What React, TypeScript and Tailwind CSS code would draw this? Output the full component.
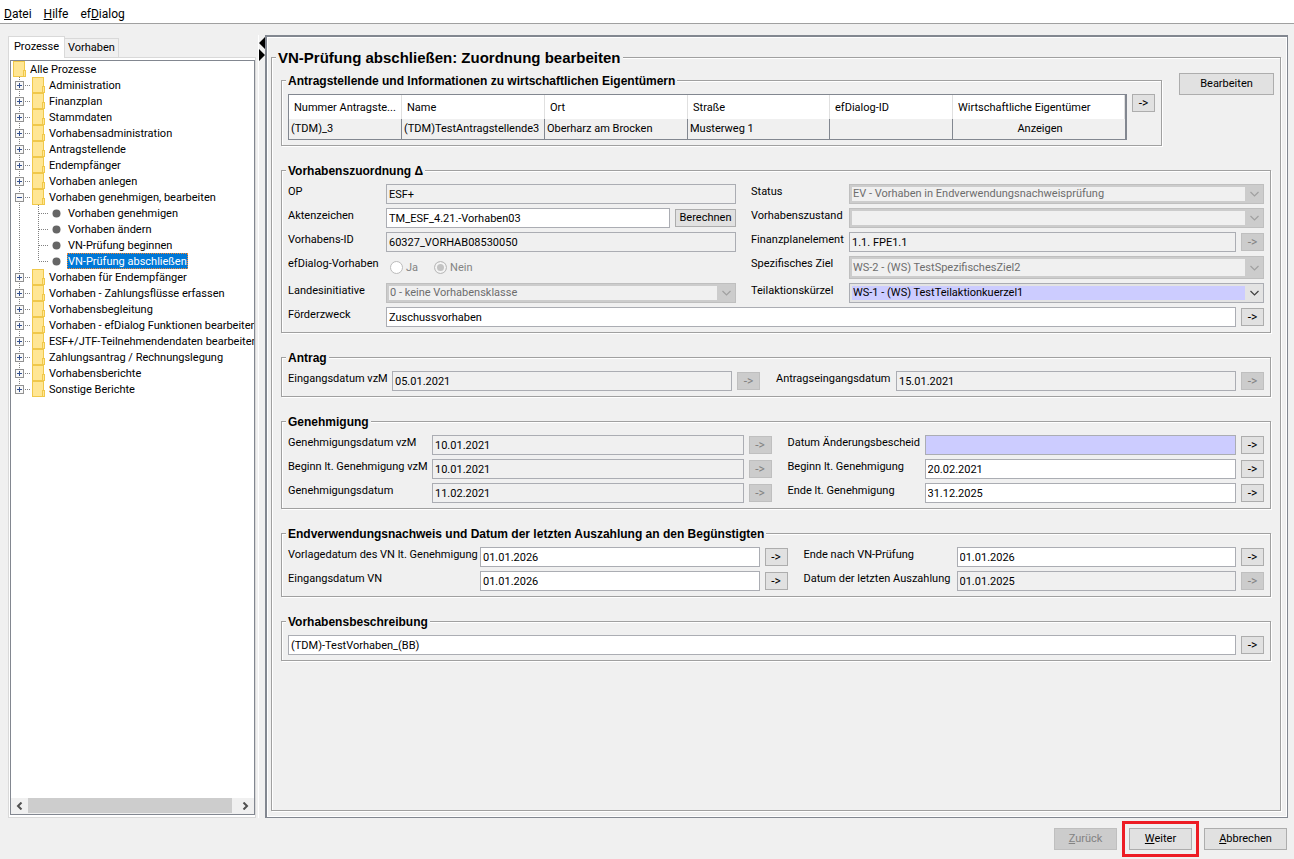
import { ReactNode, useId } from "react";
import clsx from "clsx";

interface TreeItem {
  label: string;
  children?: string[];
}

const TREE: TreeItem[] = [
  { label: "Administration" },
  { label: "Finanzplan" },
  { label: "Stammdaten" },
  { label: "Vorhabensadministration" },
  { label: "Antragstellende" },
  { label: "Endempfänger" },
  { label: "Vorhaben anlegen" },
  {
    label: "Vorhaben genehmigen, bearbeiten",
    children: [
      "Vorhaben genehmigen",
      "Vorhaben ändern",
      "VN-Prüfung beginnen",
      "VN-Prüfung abschließen",
    ],
  },
  { label: "Vorhaben für Endempfänger" },
  { label: "Vorhaben - Zahlungsflüsse erfassen" },
  { label: "Vorhabensbegleitung" },
  { label: "Vorhaben - efDialog Funktionen bearbeiten" },
  { label: "ESF+/JTF-Teilnehmendendaten bearbeiten" },
  { label: "Zahlungsantrag / Rechnungslegung" },
  { label: "Vorhabensberichte" },
  { label: "Sonstige Berichte" },
];

const ACTIVE = "VN-Prüfung abschließen";

function FolderIcon() {
  return (
    <svg width="13" height="16" viewBox="0 0 13 16" className="shrink-0" shapeRendering="crispEdges">
      <rect x="0.5" y="0.5" width="11" height="15" fill="#ffe694" stroke="#f0c84a" />
      <rect x="10.5" y="9.5" width="2" height="6" fill="#ffe694" stroke="#f0c84a" />
    </svg>
  );
}

function Expander({ open, last }: { open: boolean; last: boolean }) {
  return (
    <svg width="21" height="16" viewBox="0 0 21 16" className="shrink-0" shapeRendering="crispEdges">
      <path d={last ? "M8.5 0V8" : "M8.5 0V16"} stroke="#808080" strokeDasharray="1 1" />
      <path d="M14 8.5H19" stroke="#808080" strokeDasharray="1 1" />
      <rect x="4.5" y="4.5" width="8" height="8" fill="#f8f8f8" stroke="#919191" />
      <path d={open ? "M6 8.5H11" : "M6 8.5H11M8.5 6V11"} stroke="#33508f" />
    </svg>
  );
}

function LeafLines({ last }: { last: boolean }) {
  return (
    <svg width="52" height="16" viewBox="0 0 52 16" className="shrink-0">
      <g shapeRendering="crispEdges" stroke="#808080" strokeDasharray="1 1">
        <path d="M8.5 0V16" />
        <path d={last ? "M27.5 0V8" : "M27.5 0V16"} />
        <path d="M28 8.5H37" />
      </g>
      <circle cx="45.5" cy="8.5" r="4" fill="#666" />
    </svg>
  );
}

function Tree() {
  return (
    <ul className="flex-1 overflow-hidden leading-[18px] whitespace-nowrap">
      <li className="flex h-4 gap-1 pl-0.5">
        <FolderIcon />
        <a href="#alle">Alle Prozesse</a>
      </li>
      {TREE.map((item, i) => (
        <li key={item.label}>
          <div className="flex h-4">
            <Expander open={!!item.children} last={i === TREE.length - 1} />
            <FolderIcon />
            <a href="#prozess" className="pl-1">{item.label}</a>
          </div>
          {item.children && (
            <ul>
              {item.children.map((child, j) => (
                <li key={child} className="flex h-4 gap-1">
                  <LeafLines last={j === item.children!.length - 1} />
                  <a
                    href="#schritt"
                    className={clsx(
                      "px-px",
                      child === ACTIVE && "bg-[#0078d7] text-white outline-1 -outline-offset-1 outline-dotted outline-[#ff8728]",
                    )}
                  >
                    {child}
                  </a>
                </li>
              ))}
            </ul>
          )}
        </li>
      ))}
    </ul>
  );
}

function ScrollArrow({ dir }: { dir: "left" | "right" }) {
  return (
    <button aria-label={dir === "left" ? "Nach links" : "Nach rechts"} className="flex w-[17px] items-center justify-center">
      <svg width="7" height="8" viewBox="0 0 7 8">
        <path d={dir === "left" ? "M5.5 0.5L2 4L5.5 7.5" : "M1.5 0.5L5 4L1.5 7.5"} fill="none" stroke="#505050" strokeWidth="2" />
      </svg>
    </button>
  );
}

function Sidebar() {
  return (
    <aside className="flex w-[248px] shrink-0 flex-col pt-3">
      <div role="tablist" className="flex items-end">
        <button role="tab" aria-selected="true" className="z-10 -mb-px h-[22px] w-[57px] border border-b-0 border-[#d9d9d9] bg-white pb-0.5">
          Prozesse
        </button>
        <button role="tab" aria-selected="false" className="h-[19px] w-[54px] border border-b-0 border-l-0 border-[#d9d9d9]">
          Vorhaben
        </button>
      </div>
      <div className="flex flex-1 flex-col border border-[#d9d9d9] bg-white pt-0.5 pb-0.5 pl-px">
        <div className="flex flex-1 flex-col border border-[#828790]">
          <Tree />
          <div className="flex h-4 bg-[#f0f0f0] pb-px">
            <ScrollArrow dir="left" />
            <div className="flex-1 pr-[5px]">
              <div className="h-full bg-[#cdcdcd]" />
            </div>
            <ScrollArrow dir="right" />
          </div>
        </div>
      </div>
    </aside>
  );
}

function Splitter() {
  return (
    <div className="flex w-[9px] shrink-0 pt-[11px] pl-0.5">
      <div className="flex-1 border-l border-white">
        <svg width="6" height="26" viewBox="0 0 6 26" className="mt-0.5">
          <path d="M6 0V12L0 6ZM0 12V24L6 18Z" fill="#000" />
        </svg>
      </div>
    </div>
  );
}

const ETCHED = "min-w-0 border border-[#a0a0a0] shadow-[1px_1px_0_#fff,inset_1px_1px_0_#fff]";

function Group({ title, children, className }: { title: string; children: ReactNode; className?: string }) {
  return (
    <fieldset className={clsx(ETCHED, className)}>
      <legend className="ml-1 bg-[#f0f0f0] px-0.5 pt-0.5 font-['Liberation_Sans',sans-serif] text-[12px] leading-[14px] font-bold">
        {title}
      </legend>
      <div className="px-1.5 pt-1.5 pb-[5px]">{children}</div>
    </fieldset>
  );
}

interface ButtonProps {
  children: ReactNode;
  disabled?: boolean;
  className?: string;
}

function Button({ children, disabled, className }: ButtonProps) {
  return (
    <button
      disabled={disabled}
      className={clsx(
        "shrink-0 border",
        disabled ? "border-[#bfbfbf] bg-[#ccc] text-[#838383]" : "border-[#adadad] bg-[#e1e1e1]",
        className,
      )}
    >
      {children}
    </button>
  );
}

function ArrowButton({ disabled }: { disabled?: boolean }) {
  return (
    <Button disabled={disabled} className="h-[18px] w-[23px] text-[12px] leading-4">
      -&gt;
    </Button>
  );
}

interface FieldProps {
  label: string;
  value?: string;
  readOnly?: boolean;
  highlight?: boolean;
  arrow?: "on" | "off";
  indent?: string;
  wide?: boolean;
  extra?: ReactNode;
}

function Field({ label, value = "", readOnly, highlight, arrow, indent, wide, extra }: FieldProps) {
  const id = useId();
  return (
    <>
      <label htmlFor={id} className={clsx("whitespace-nowrap", indent)}>
        {label}
      </label>
      <div className={clsx("flex h-5 items-center gap-[5px]", wide && "col-span-3")}>
        <input
          id={id}
          defaultValue={value}
          readOnly={readOnly}
          className={clsx(
            "h-5 min-w-0 flex-1 border border-[#abadb3] px-0.5",
            highlight ? "bg-[#ccccff]" : readOnly ? "bg-[#f0f0f0]" : "bg-white",
          )}
        />
        {extra}
        {arrow && <ArrowButton disabled={arrow === "off"} />}
      </div>
    </>
  );
}

interface SelectFieldProps {
  label: string;
  value?: string;
  disabled?: boolean;
  indent?: string;
}

function SelectField({ label, value = "", disabled, indent }: SelectFieldProps) {
  const id = useId();
  return (
    <>
      <label htmlFor={id} className={clsx("whitespace-nowrap", indent)}>
        {label}
      </label>
      <div
        className={clsx(
          "flex min-h-5 border p-0.5",
          disabled ? "border-[#bfbfbf] bg-[#ccc]" : "border-[#abadb3] bg-[#e3e3e3]",
        )}
      >
        <select
          id={id}
          disabled={disabled}
          className={clsx(
            "min-h-[14px] min-w-0 flex-1 appearance-none pl-px leading-[14px] opacity-100",
            disabled ? "bg-[#f0f0f0] text-[#6d6d6d]" : "bg-[#ccccff]",
          )}
        >
          <option>{value}</option>
        </select>
        <svg width="16" height="14" viewBox="0 0 16 14" className="shrink-0 self-center">
          <path d="M5.5 5L9.5 9L13.5 5" fill="none" stroke={disabled ? "#a0a0a0" : "#404040"} strokeWidth="1.2" />
        </svg>
      </div>
    </>
  );
}

function RadioField() {
  return (
    <>
      <span id="efdialog">efDialog-Vorhaben</span>
      <div role="radiogroup" aria-labelledby="efdialog" className="flex h-[23px] items-center gap-4 pl-1 text-[#838383]">
        {["Ja", "Nein"].map((option) => (
          <label key={option} className="flex items-center gap-[3px]">
            <input
              type="radio"
              name="efdialog"
              disabled
              defaultChecked={option === "Nein"}
              className="size-[13px] appearance-none rounded-full border border-[#bcbcbc] bg-white checked:bg-[#c3c3c3] checked:shadow-[inset_0_0_0_2px_#f4f4f4]"
            />
            {option}
          </label>
        ))}
      </div>
    </>
  );
}

const COLUMNS = [
  { head: "Nummer Antragste...", cell: "(TDM)_3", width: "w-[113px]" },
  { head: "Name", cell: "(TDM)TestAntragstellende3", width: "w-[143px]" },
  { head: "Ort", cell: "Oberharz am Brocken", width: "w-[143px]" },
  { head: "Straße", cell: "Musterweg 1", width: "w-[142px]" },
  { head: "efDialog-ID", cell: "", width: "w-[123px]" },
  { head: "Wirtschaftliche Eigentümer", cell: "Anzeigen", width: "w-[172px]" },
];

function ApplicantTable() {
  return (
    <div className="min-w-0 flex-1 border border-r-2 border-[#828790]">
      <table className="w-full table-fixed border-separate border-spacing-0 whitespace-nowrap">
        <thead>
          <tr className="h-6 bg-white">
            {COLUMNS.map((c) => (
              <th key={c.head} className={clsx("overflow-hidden border-r border-[#e0e0e0] pt-0.5 pl-[5px] text-left font-normal", c.width)}>
                {c.head}
              </th>
            ))}
          </tr>
        </thead>
        <tbody>
          <tr className="h-5">
            {COLUMNS.map((c) => (
              <td
                key={c.head}
                className={clsx(
                  "overflow-hidden border-r border-[#828790] pl-0.5 last:border-r-0",
                  c.cell === "Anzeigen" && "text-center",
                )}
              >
                {c.cell}
              </td>
            ))}
          </tr>
        </tbody>
      </table>
    </div>
  );
}

function MainPanel() {
  return (
    <main className="mt-[11px] mr-1.5 flex min-w-0 flex-1 flex-col border-t-2 border-r border-b border-l-2 border-[#828790] pt-[11px] pr-1.5 pb-1.5 pl-1 shadow-[inset_1px_1px_0_#fff,inset_-1px_-1px_0_#fff]">
      <fieldset className={clsx(ETCHED, "flex-1")}>
        <legend className="ml-1 bg-[#f0f0f0] px-0.5 pt-0.5 font-['Liberation_Sans',sans-serif] text-[15px] leading-4 font-bold">
          VN-Prüfung abschließen: Zuordnung bearbeiten
        </legend>
        <div className="flex flex-col gap-4 px-[9px] pt-1.5">
          <div className="-mr-[3px] flex items-start gap-[17px]">
            <Group title="Antragstellende und Informationen zu wirtschaftlichen Eigentümern" className="flex-1">
              <div className="flex items-start gap-[5px]">
                <ApplicantTable />
                <ArrowButton />
              </div>
            </Group>
            <Button className="mt-px h-[22px] w-[95px]">Bearbeiten</Button>
          </div>

          <Group title="Vorhabenszuordnung Δ">
            <div className="grid grid-cols-[98px_350fr_113px_415fr] gap-y-1">
              <Field label="OP" value="ESF+" readOnly />
              <SelectField label="Status" value="EV - Vorhaben in Endverwendungsnachweisprüfung" disabled indent="pl-[15px]" />
              <Field
                label="Aktenzeichen"
                value="TM_ESF_4.21.-Vorhaben03"
                extra={<Button className="h-[18px] w-[61px]">Berechnen</Button>}
              />
              <SelectField label="Vorhabenszustand" disabled indent="pl-[15px]" />
              <Field label="Vorhabens-ID" value="60327_VORHAB08530050" readOnly />
              <Field label="Finanzplanelement" value="1.1. FPE1.1" readOnly arrow="off" indent="pl-[15px]" />
              <RadioField />
              <SelectField label="Spezifisches Ziel" value="WS-2 - (WS) TestSpezifischesZiel2" disabled indent="pl-[15px]" />
              <SelectField label="Landesinitiative" value="0 - keine Vorhabensklasse" disabled />
              <SelectField label="Teilaktionskürzel" value="WS-1 - (WS) TestTeilaktionkuerzel1" indent="pl-[15px]" />
              <Field label="Förderzweck" value="Zuschussvorhaben" arrow="on" wide />
            </div>
          </Group>

          <Group title="Antrag">
            <div className="grid grid-cols-[104px_368fr_136px_368fr] gap-y-1">
              <Field label="Eingangsdatum vzM" value="05.01.2021" readOnly arrow="off" />
              <Field label="Antragseingangsdatum" value="15.01.2021" readOnly arrow="off" indent="pl-4" />
            </div>
          </Group>

          <Group title="Genehmigung">
            <div className="grid grid-cols-[144px_1fr_153px_1fr] gap-y-1">
              <Field label="Genehmigungsdatum vzM" value="10.01.2021" readOnly arrow="off" />
              <Field label="Datum Änderungsbescheid" highlight arrow="on" indent="pl-4" />
              <Field label="Beginn lt. Genehmigung vzM" value="10.01.2021" readOnly arrow="off" />
              <Field label="Beginn lt. Genehmigung" value="20.02.2021" arrow="on" indent="pl-4" />
              <Field label="Genehmigungsdatum" value="11.02.2021" readOnly arrow="off" />
              <Field label="Ende lt. Genehmigung" value="31.12.2025" arrow="on" indent="pl-4" />
            </div>
          </Group>

          <Group title="Endverwendungsnachweis und Datum der letzten Auszahlung an den Begünstigten">
            <div className="grid grid-cols-[192px_1fr_169px_1fr] gap-y-1">
              <Field label="Vorlagedatum des VN lt. Genehmigung" value="01.01.2026" arrow="on" />
              <Field label="Ende nach VN-Prüfung" value="01.01.2026" arrow="on" indent="pl-4" />
              <Field label="Eingangsdatum VN" value="01.01.2026" arrow="on" />
              <Field label="Datum der letzten Auszahlung" value="01.01.2025" readOnly arrow="off" indent="pl-4" />
            </div>
          </Group>

          <Group title="Vorhabensbeschreibung">
            <div className="flex items-center gap-[5px]">
              <input
                aria-label="Vorhabensbeschreibung"
                defaultValue="(TDM)-TestVorhaben_(BB)"
                className="h-5 min-w-0 flex-1 border border-[#abadb3] bg-white px-0.5"
              />
              <ArrowButton />
            </div>
          </Group>
        </div>
      </fieldset>
    </main>
  );
}

export default function App() {
  return (
    <div className="flex min-h-screen flex-col bg-[#f0f0f0] font-[Roboto,'DejaVu_Sans_Condensed',sans-serif] text-[11px] leading-4 text-black">
      <nav className="flex h-6 items-center gap-3 border-b border-[#a0a0a0] bg-white px-1 pt-1 text-[12px]">
        <a href="#datei"><u>D</u>atei</a>
        <a href="#hilfe"><u>H</u>ilfe</a>
        <a href="#efdialog">ef<u>D</u>ialog</a>
      </nav>
      <div className="flex flex-1 pl-2">
        <Sidebar />
        <Splitter />
        <MainPanel />
      </div>
      <footer className="flex items-center justify-end gap-[5px] pt-[3px] pr-[7px] pb-0.5">
        <Button disabled className="h-[22px] w-[63px]"><u>Z</u>urück</Button>
        <div className="border-[3px] border-[#ed1c24] p-1">
          <Button className="h-[22px] w-[63px]"><u>W</u>eiter</Button>
        </div>
        <Button className="h-[22px] w-[83px]"><u>A</u>bbrechen</Button>
      </footer>
    </div>
  );
}
